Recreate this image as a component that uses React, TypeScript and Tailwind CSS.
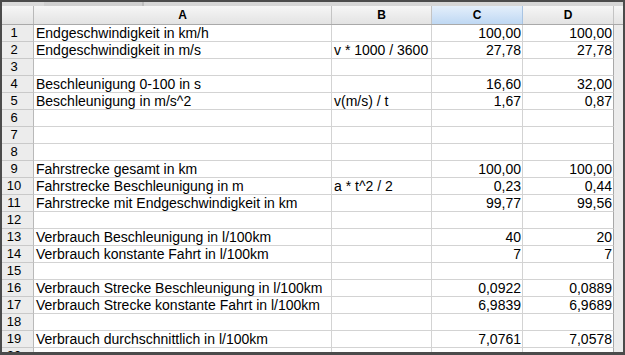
import React from "react";

type Row = [string, string, string, string];

const rows: Row[] = [
  ["Endgeschwindigkeit in km/h", "", "100,00", "100,00"],
  ["Endgeschwindigkeit in m/s", "v * 1000 / 3600", "27,78", "27,78"],
  ["", "", "", ""],
  ["Beschleunigung 0-100 in s", "", "16,60", "32,00"],
  ["Beschleunigung in m/s^2", "v(m/s) / t", "1,67", "0,87"],
  ["", "", "", ""],
  ["", "", "", ""],
  ["", "", "", ""],
  ["Fahrstrecke gesamt in km", "", "100,00", "100,00"],
  ["Fahrstrecke Beschleunigung in m", "a * t^2 / 2", "0,23", "0,44"],
  ["Fahrstrecke mit Endgeschwindigkeit in km", "", "99,77", "99,56"],
  ["", "", "", ""],
  ["Verbrauch Beschleunigung in l/100km", "", "40", "20"],
  ["Verbrauch konstante Fahrt in l/100km", "", "7", "7"],
  ["", "", "", ""],
  ["Verbrauch Strecke Beschleunigung in l/100km", "", "0,0922", "0,0889"],
  ["Verbrauch Strecke konstante Fahrt in l/100km", "", "6,9839", "6,9689"],
  ["", "", "", ""],
  ["Verbrauch durchschnittlich in l/100km", "", "7,0761", "7,0578"],
  ["", "", "", ""],
];

export default function App() {
  return (
    <div
      className="w-[625px] h-[355px] bg-[#4b4b4b] pt-[2px] px-[2px] pb-[3px] overflow-hidden"
      style={{ fontFamily: '"Liberation Sans", Arial, sans-serif' }}
    >
      <div className="w-full h-full bg-white flex flex-col overflow-hidden">
        {/* top strip */}
        <div className="h-[4px] shrink-0 flex bg-[#d2d2d2]">
          <div className="w-[42px] bg-[#dadada]" />
          <div className="w-[98px] bg-[#cfcfcf]" />
          <div className="w-[2px] bg-[#bdbdbd]" />
          <div className="flex-1 bg-[#d6d6d6]" />
        </div>
        {/* header */}
        <div className="h-[19px] shrink-0 flex border-b border-[#a9a9a9] bg-gradient-to-b from-[#f6f6f6] to-[#e3e3e3] text-[12px] font-bold text-black leading-[18px]">
          <div className="w-[32px] shrink-0 border-r border-[#b9b9b9]" />
          <div className="w-[298px] shrink-0 border-r border-[#c4c4c4] text-center">A</div>
          <div className="w-[100px] shrink-0 border-r border-[#c4c4c4] text-center">B</div>
          <div className="w-[91px] shrink-0 border-r border-[#a9c4e2] text-center bg-gradient-to-b from-[#e4effb] to-[#bfd8f3]">C</div>
          <div className="w-[91px] shrink-0 border-r border-[#c4c4c4] text-center">D</div>
          <div className="flex-1" />
        </div>
        {/* rows */}
        {rows.map((r, i) => (
          <div key={i} className="h-[17px] shrink-0 flex text-[14px] leading-[16px] text-black">
            <div className="w-[32px] shrink-0 border-r border-b border-r-[#b9b9b9] border-b-[#c9c9c9] bg-[#ececec] text-[13px] text-center pr-[7px]">
              {i + 1}
            </div>
            <div className="w-[298px] shrink-0 border-r border-b border-[#d3d3d3] pl-[2px] whitespace-nowrap relative z-10">
              {r[0]}
            </div>
            <div className="w-[100px] shrink-0 border-r border-b border-[#d3d3d3] pl-[2px] whitespace-nowrap">
              {r[1]}
            </div>
            <div className="w-[91px] shrink-0 border-r border-b border-[#d3d3d3] pr-[1px] text-right whitespace-nowrap">
              {r[2]}
            </div>
            <div className="w-[91px] shrink-0 border-r border-b border-r-[#a8a8a8] border-b-[#d3d3d3] pr-[1px] text-right whitespace-nowrap">
              {r[3]}
            </div>
            <div className="flex-1 bg-[#ececec]" />
          </div>
        ))}
      </div>
    </div>
  );
}
